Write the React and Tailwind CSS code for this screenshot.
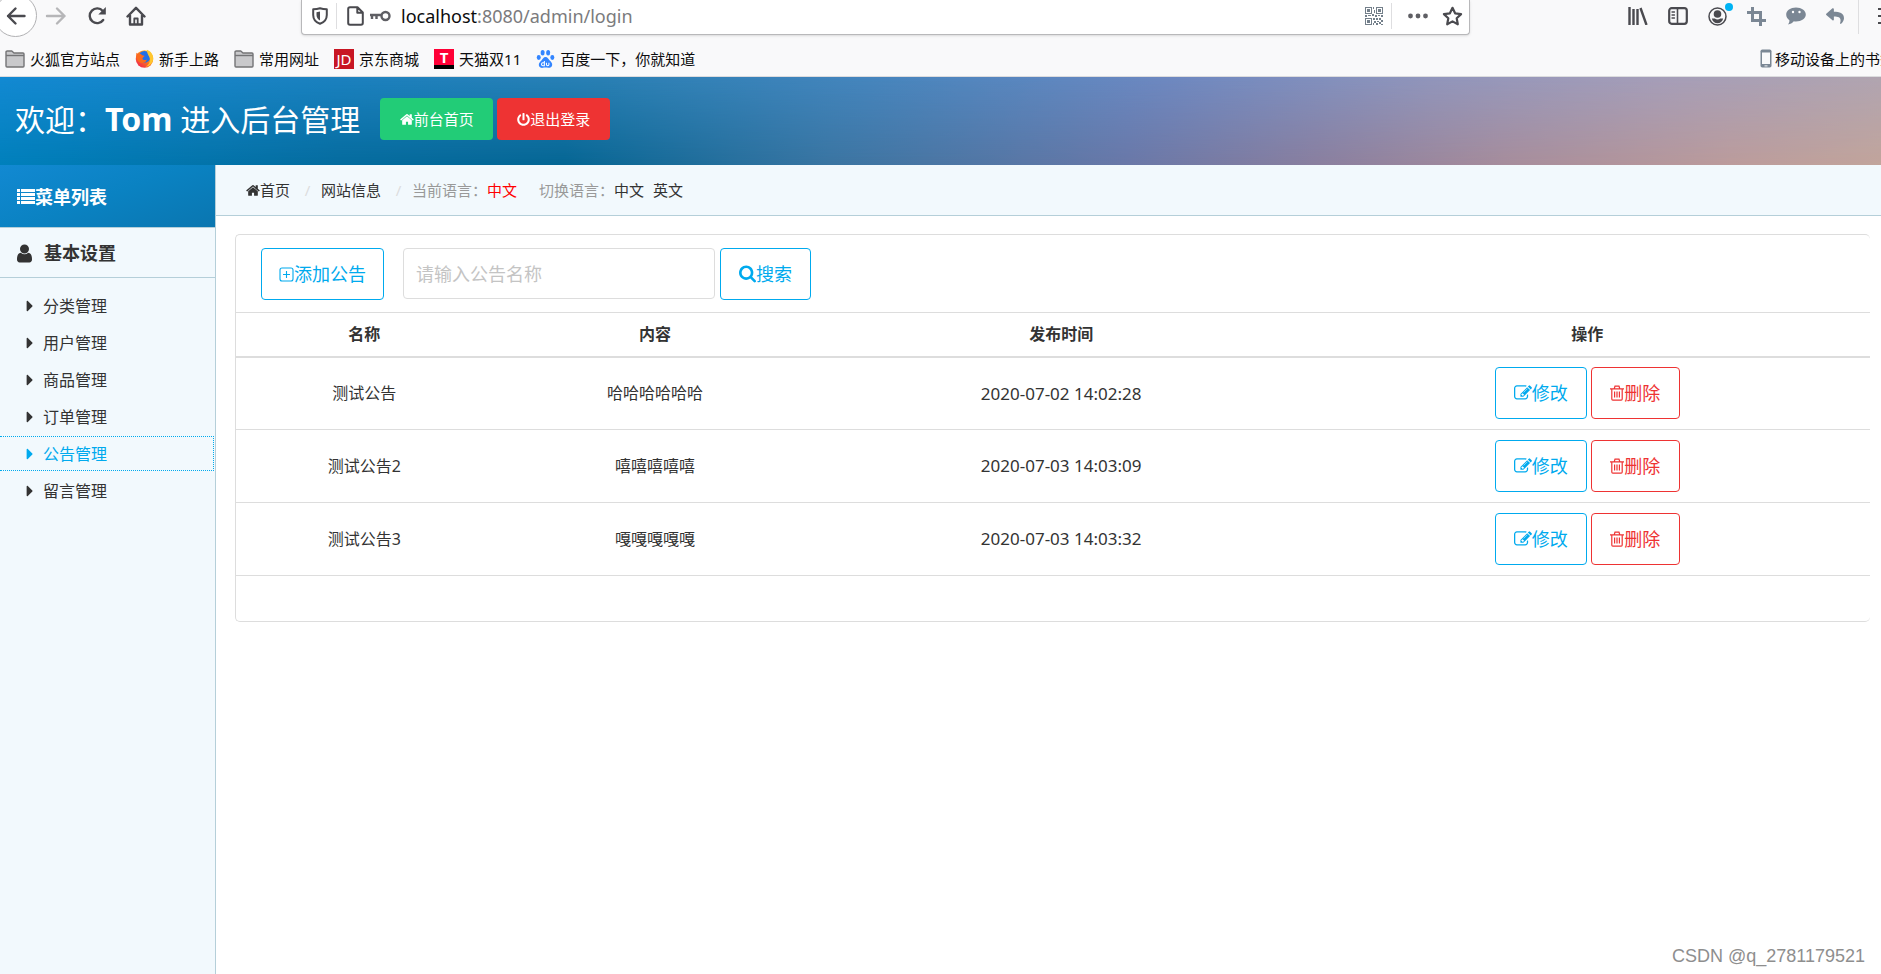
import React from 'react'
import { FaPowerOff, FaCaretRight, FaReply } from 'react-icons/fa'

const sideItems = ['分类管理', '用户管理', '商品管理', '订单管理', '公告管理', '留言管理']

const notices = [
  { id: 1, name: '测试公告', content: '哈哈哈哈哈哈', time: '2020-07-02 14:02:28' },
  { id: 2, name: '测试公告2', content: '嘻嘻嘻嘻嘻', time: '2020-07-03 14:03:09' },
  { id: 3, name: '测试公告3', content: '嘎嘎嘎嘎嘎', time: '2020-07-03 14:03:32' },
]

function HomeIcon() {
  return (
    <svg width="14" height="15" viewBox="64 0 1664 1792" fill="currentColor">
      <path d="M1472 992v480q0 26-19 45t-45 19h-384v-384h-256v384h-384q-26 0-45-19t-19-45v-480q0-1 .5-3t.5-3l575-474 575 474q1 2 1 6zm223-69l-62 74q-8 9-21 11h-3q-13 0-21-7l-692-577-692 577q-12 8-24 7-13-2-21-11l-62-74q-8-10-7-23.5t11-21.5l719-599q32-26 76-26t76 26l244 204v-195q0-14 9-23t23-9h192q14 0 23 9t9 23v408l219 182q10 8 11 21.5t-7 23.5z" />
    </svg>
  )
}

function UserIcon() {
  return (
    <svg width="15" height="21" viewBox="256 0 1280 1792" fill="currentColor">
      <path d="M1536 1399q0 109-62.5 187t-150.5 78h-854q-88 0-150.5-78t-62.5-187q0-85 8.500-160.500t31.500-152 58.500-131 94-89 134.500-34.500q131 128 313 128t313-128q76 0 134.500 34.500t94 89 58.500 131 31.500 152 8.500 160.500zm-256-887q0 159-112.500 271.500t-271.500 112.500-271.500-112.500-112.500-271.500 112.500-271.500 271.500-112.500 271.500 112.500 112.500 271.500z" />
    </svg>
  )
}

function SearchIcon() {
  return (
    <svg width="17" height="18" viewBox="64 128 1664 1664" fill="currentColor">
      <path d="M1216 832q0-185-131.500-316.500t-316.500-131.500-316.500 131.500-131.500 316.500 131.500 316.500 316.500 131.500 316.500-131.500 131.500-316.500zm512 832q0 52-38 90t-90 38q-54 0-90-38l-343-342q-179 124-399 124-143 0-273.500-55.500t-225-150-150-225-55.500-273.500 55.500-273.500 150-225 225-150 273.500-55.500 273.500 55.500 225 150 150 225 55.500 273.500q0 220-124 399l343 343q37 37 37 90z" />
    </svg>
  )
}

function EditIcon() {
  return (
    <svg width="18" height="18" viewBox="0 0 1792 1792" fill="currentColor">
      <path d="M888 1184l116-116-152-152-116 116v56h96v96h56zm440-720q-16-16-33 1l-350 350q-17 17-1 33t33-1l350-350q17-17 1-33zm80 594v190q0 119-84.500 203.500t-203.500 84.500h-832q-119 0-203.500-84.500t-84.500-203.500v-832q0-119 84.500-203.500t203.500-84.500h832q63 0 117 25 15 7 18 23 3 17-9 29l-49 49q-14 14-32 8-23-6-45-6h-832q-66 0-113 47t-47 113v832q0 66 47 113t113 47h832q66 0 113-47t47-113v-126q0-13 9-22l64-64q15-15 35-7t20 29zm-96-738l288 288-672 672h-288v-288zm444 132l-92 92-288-288 92-92q28-28 68-28t68 28l152 152q28 28 28 68t-28 68z" />
    </svg>
  )
}

function TrashIcon() {
  return (
    <svg width="14" height="16" viewBox="0 0 14 16" fill="none" stroke="currentColor" strokeWidth="1.2">
      <path d="M0 3.800h14M1.800 4v10c0 .8.4 1.200 1 1.200h8.400c.6 0 1-.4 1-1.200V4M4.300 3.500L5 1.200h4l.7 2.300M4.600 6.500v6M7 6.500v6M9.400 6.500v6" />
    </svg>
  )
}

function FolderIcon() {
  return (
    <svg width="20" height="18" viewBox="0 0 20 18" fill="#c9c9cb" stroke="#747476" strokeWidth="1.4" strokeLinejoin="round">
      <path d="M1 16V2.200C1 1.500 1.500 1 2.200 1h4.600L9 3h9c.6 0 1 .4 1 1v12c0 .6-.4 1-1 1H2c-.6 0-1-.4-1-1z" />
      <path d="M1 5.500h18" />
    </svg>
  )
}

function FirefoxIcon() {
  return (
    <svg width="19" height="19" viewBox="0 0 20 20">
      <defs>
        <linearGradient id="fox" x1="1" y1="0" x2="0.2" y2="1">
          <stop offset="0" stopColor="#ffd83a" />
          <stop offset="0.45" stopColor="#ff8a16" />
          <stop offset="1" stopColor="#f0234e" />
        </linearGradient>
      </defs>
      <circle cx="10" cy="10.500" r="9.200" fill="url(#fox)" />
      <circle cx="10" cy="8.300" r="6.300" fill="#1f6fe8" />
      <path d="M12.500.8c4.500 1.700 7 5.400 6.600 9.700-.4 4.500-4 7.700-8 8.200 3.300-2 5-4.800 4.600-8.200-.3-2-1.400-3.300-2.100-5C13 4 12.300 2.500 12.500.8z" fill="#ffc62e" />
      <path d="M1.500 4c1 1 2 1.100 3.200 1 1.200 0 2.200.7 2.900 1.700l2.400.5c-.2 1.300-1.700 1.600-2.200 2.800.4 1.700 2.600 2.200 4.700 1-.7 3.200-4 4.500-6.800 3.400C2.300 13.200.7 8.600 1.500 4z" fill="#fb6a1d" />
    </svg>
  )
}

function PawIcon() {
  return (
    <svg width="19" height="20" viewBox="0 0 20 21" fill="#3385ff">
      <ellipse cx="2.900" cy="9" rx="2.100" ry="2.600" />
      <ellipse cx="7" cy="4" rx="2.100" ry="2.900" />
      <ellipse cx="12.800" cy="4" rx="2.100" ry="2.900" />
      <ellipse cx="17.200" cy="9" rx="2.100" ry="2.600" />
      <path d="M10 8.500c2.200 0 3 2 4.400 3.500 1.600 1.600 3 2.700 2.600 5-.4 2.200-2.400 3-4.200 2.800-1.900-.3-3.700-.3-5.600 0C5.400 20.100 3.300 19.200 3 17c-.3-2.200 1.200-3.500 2.700-5C7.200 10.500 7.800 8.500 10 8.500z" />
      <path d="M8.800 12.500v5H7.300c-2 0-2-3 0-3h1.500M11 14.400v2.200c0 1.200 2.600 1.200 2.600 0v-2.200" fill="none" stroke="#fff" strokeWidth="1.1" />
    </svg>
  )
}

function PhoneIcon() {
  return (
    <svg width="12" height="19" viewBox="0 0 12 19">
      <rect x="0.500" y="0.500" width="11" height="18" rx="1.800" fill="#7b8794" />
      <rect x="2" y="3.500" width="8" height="11.500" fill="#f9f9fa" />
      <rect x="4.500" y="16.200" width="3" height="1.300" fill="#d8dce0" />
    </svg>
  )
}

function QrIcon() {
  return (
    <svg width="18" height="18" viewBox="0 0 18 18" fill="#737f8a" shapeRendering="crispEdges">
      <path d="M0 0h7v7H0zM1 1v5h5V1zM11 0h7v7h-7zM12 1v5h5V1zM0 11h7v7H0zM1 12v5h5v-5z" fillRule="evenodd" />
      <path d="M2 2h3v3H2zM13 2h3v3h-3zM2 13h3v3H2zM8 0h1v2H8zM9 3h1v3H9zM0 8h2v2H0zM3 8h3v1H3zM7 7h2v2H7zM10 8h2v2h-2zM13 8h2v1h-2zM16 8h2v2h-2zM8 11h2v2H8zM11 11h2v2h-2zM14 11h2v2h-2zM9 14h2v2H9zM12 14h2v1h-2zM16 13h2v2h-2zM8 16h1v2H8zM11 16h2v2h-2zM14 15h2v2h-2zM16 17h2v1h-2z" />
    </svg>
  )
}

const stroke = { fill: 'none', stroke: '#4a4a4f', strokeWidth: 2.4, strokeLinecap: 'round', strokeLinejoin: 'round' }

function BrowserBar() {
  return (
    <div className="flex h-[35px] items-start">
      <div className="flex w-[301px] shrink-0 items-start">
        <button aria-label="后退" className="-ml-1.5 -mt-1.5 flex size-[43px] shrink-0 items-center justify-center rounded-full border border-[#b1b1b3] bg-white">
          <svg width="20" height="20" viewBox="0 0 20 20" {...stroke}><path d="M18.500 10H2M9.500 2.500L2 10l7.500 7.500" /></svg>
        </button>
        <button aria-label="前进" className="ml-2 mt-1.5">
          <svg width="22" height="20" viewBox="0 0 22 20" {...stroke} stroke="#b6b6b8"><path d="M2 10h17.500M12 2.500l7.500 7.500-7.500 7.500" /></svg>
        </button>
        <button aria-label="刷新" className="ml-5 mt-1.5">
          <svg width="20" height="20" viewBox="0 0 20 20" {...stroke}>
            <path d="M16.200 14A7.400 7.400 0 1 1 15.800 5" />
            <path d="M18.800 1v7.500h-7.500z" fill="#4a4a4f" stroke="none" />
          </svg>
        </button>
        <button aria-label="主页" className="ml-[19px] mt-1.5">
          <svg width="20" height="20" viewBox="0 0 20 20" {...stroke}>
            <path d="M1.500 10.500L10 1.800l8.500 8.700M4 9.500v9h12v-9" />
            <path d="M8.300 18v-5.500h3.400V18" strokeWidth="1.800" />
          </svg>
        </button>
      </div>
      <div className="flex h-[35px] w-[1169px] shrink items-center rounded-b-sm border border-t-0 border-[#b8b8ba] bg-white pb-[3px] pl-2.5 pr-1.5 shadow-sm">
        <svg width="16" height="18" viewBox="0 0 16 18" {...stroke} strokeWidth="2">
          <path d="M8 1.200C5.800 2 3.500 2.300 1.200 2.300V8c0 4.200 2.600 7.300 6.800 8.800 4.200-1.500 6.800-4.600 6.800-8.800V2.300C12.500 2.300 10.200 2 8 1.200z" />
          <path d="M8 4.500v9C5.800 12.300 4.500 10.500 4.500 8V5.200z" fill="#4a4a4f" stroke="none" />
        </svg>
        <span className="ml-2 h-[26px] w-px bg-[#dedee0]" />
        <svg className="ml-2.5" width="17" height="20" viewBox="0 0 17 20" {...stroke} strokeWidth="2">
          <path d="M1.200 3c0-1 .8-1.800 1.800-1.800h7.500l5.300 5.300V17c0 1-.8 1.800-1.800 1.800H3c-1 0-1.800-.8-1.800-1.800zM10.300 1.500v5.200h5.200" />
        </svg>
        <svg className="ml-1.5" width="21" height="12" viewBox="0 0 21 12" fill="none" stroke="#5f5f64" strokeWidth="2.4">
          <circle cx="15.500" cy="6" r="4" />
          <path d="M11.500 5H0M2 5v4M6.500 5v4" />
        </svg>
        <p className="ml-2.5 flex-1 whitespace-nowrap text-[18px] leading-6 text-[#7b7b7d]">
          <span className="text-[#0c0c0d]">localhost</span>:8080/admin/login
        </p>
        <QrIcon />
        <span className="ml-2 h-[26px] w-px bg-[#dedee0]" />
        <button aria-label="更多" className="ml-4">
          <svg width="20" height="6" viewBox="0 0 20 6" fill="#5f5f64"><circle cx="2.500" cy="3" r="2.400" /><circle cx="10" cy="3" r="2.400" /><circle cx="17.500" cy="3" r="2.400" /></svg>
        </button>
        <button aria-label="收藏" className="ml-3.5">
          <svg width="21" height="20" viewBox="0 0 21 20" {...stroke} strokeWidth="2.2"><path d="M10.500 1.800l2.600 5.500 6 .8-4.400 4.200 1.100 6-5.300-2.900-5.300 2.900 1.100-6L1.900 8.100l6-.8z" /></svg>
        </button>
      </div>
      <div className="ml-auto flex h-8 shrink-0 items-center gap-5">
        <svg width="20" height="18" viewBox="0 0 20 18" fill="none" stroke="#4a4a4f" strokeWidth="2.4"><path d="M1.500 0v18M5.500 2v16M9.500 2v16M12.500 1l6 17" /></svg>
        <svg width="20" height="18" viewBox="0 0 20 18" {...stroke} strokeWidth="2.2"><rect x="1.200" y="1.200" width="17.600" height="15.600" rx="2.500" /><path d="M9.500 1.500v15" strokeWidth="1.600" /><path d="M4 5h2.500M4 8h2.500M4 11h2.500" strokeWidth="1.300" /></svg>
        <div className="relative">
          <svg width="19" height="19" viewBox="0 0 19 19"><circle cx="9.500" cy="9.500" r="8.500" fill="none" stroke="#4a4a4f" strokeWidth="1.5" /><circle cx="9.500" cy="7" r="3.800" fill="#4a4a4f" /><path d="M3.800 11.500h3c1.500 1.200 4 1.200 5.400 0h3c-.7 3-3 4.800-5.700 4.800s-5-1.800-5.700-4.800z" fill="#4a4a4f" /></svg>
          <span className="absolute -right-1.5 -top-1 size-2 rounded-full bg-[#00b3f4]" />
        </div>
        <svg width="19" height="19" viewBox="0 0 19 19" fill="none" stroke="#7b8794" strokeWidth="3"><path d="M5.500 0v13.500H19M0 5.500h13.500V19" /></svg>
        <svg width="20" height="18" viewBox="0 0 20 18"><path d="M10 .5c5.500 0 9.800 3 9.800 7s-4.300 7-9.800 7c-.8 0-1.500 0-2.200-.2C6.300 16 4.300 17.300 2 17.500c1-1.200 1.500-2.600 1.400-4.300C1.400 11.900.2 9.900.2 7.500c0-4 4.300-7 9.800-7z" fill="#7b8794" /><circle cx="7" cy="5" r="1.200" fill="#fff" /><circle cx="13.500" cy="5" r="1.200" fill="#fff" /></svg>
        <FaReply className="size-[18px] text-[#7b8794]" />
        <span className="-ml-1.5 h-[36px] w-px bg-[#dedee0]" />
        <svg className="-ml-0.5" width="4" height="18" viewBox="0 0 4 18" fill="#4a4a4f"><path d="M1 1h3v2H1zM1 8h3v2H1zM1 15h3v2H1z" /></svg>
      </div>
    </div>
  )
}

function Bookmarks() {
  return (
    <nav className="flex h-[42px] items-center border-b border-[#dcdcde] pl-[5px] pt-1.5 text-[15px] leading-5 text-[#0c0c0d]">
      <div className="flex flex-1 items-center gap-[15px] whitespace-nowrap">
        <a href="#" className="flex items-center gap-[5px]"><FolderIcon />火狐官方站点</a>
        <a href="#" className="flex items-center gap-[5px]"><FirefoxIcon />新手上路</a>
        <a href="#" className="flex items-center gap-[5px]"><FolderIcon />常用网址</a>
        <a href="#" className="flex items-center gap-[5px]">
          <span className="flex size-5 items-center justify-center bg-[#c81623] text-[15px] leading-5 text-white">JD</span>京东商城
        </a>
        <a href="#" className="flex items-center gap-[5px]">
          <span className="flex size-5 items-start justify-center border-b-4 border-black bg-[#ff0036] text-[15px] font-bold leading-4 text-white">T</span>天猫双11
        </a>
        <a href="#" className="flex items-center gap-[5px]"><PawIcon />百度一下，你就知道</a>
      </div>
      <a href="#" className="flex w-[121px] items-center gap-[3px] overflow-hidden whitespace-nowrap">
        <span className="shrink-0"><PhoneIcon /></span>移动设备上的书签
      </a>
    </nav>
  )
}

function Header() {
  return (
    <header className="relative h-[88px] bg-[linear-gradient(90deg,#0080bc_0%,#056c9f_18%,#056694_30%,#3a75a2_44%,#6a78a8_60%,#8a7f9f_70%,#a78d9c_80%,#bc9c9c_92%,#c2a59c_100%)] text-white">
      {/* lighter upper edge that fades into the base colours */}
      <div className="absolute inset-0 bg-[linear-gradient(90deg,#1289d2_0%,#1b81bf_18%,#2a80b4_32%,#4585bd_46%,#6d88c0_62%,#9095bb_76%,#a49db8_88%,#b0a4b0_100%)] [mask-image:linear-gradient(to_bottom,#000,transparent)]" />
      <div className="relative flex h-full items-center pb-1 pl-[15px]">
        <h1 className="text-[30px]">欢迎：<b className="text-[32px]">Tom</b> 进入后台管理</h1>
        <div className="ml-5 flex gap-1 text-[15px]">
          <a href="#" className="flex h-[42px] w-[113px] items-center justify-center rounded bg-[#22cc77]"><HomeIcon />前台首页</a>
          <a href="#" className="flex h-[42px] w-[113px] items-center justify-center rounded bg-[#ee3333]"><FaPowerOff className="size-[13px]" />退出登录</a>
        </div>
      </div>
    </header>
  )
}

function Sidebar() {
  return (
    <aside className="w-[216px] shrink-0 border-r border-[#b5cfd9] bg-[#f2f9fd]">
      <div className="flex h-[62px] items-center bg-[linear-gradient(160deg,#1289d2_0%,#0a82c2_50%,#0a76b0_100%)] pl-[17px] pt-0.5 text-[18px] font-bold text-white">
        <svg width="18" height="16" viewBox="0 0 18 16" fill="currentColor"><path d="M0 0h3v3H0zM4 0h14v3H4zM0 4h3v3H0zM4 4h14v3H4zM0 8h3v3H0zM4 8h14v3H4zM0 12h3v3H0zM4 12h14v3H4z" /></svg>
        菜单列表
      </div>
      <h2 className="flex h-[51px] items-center gap-3 border-y border-[#b5cfd9] pl-[17px] pt-0.5 text-[18px] font-bold">
        <UserIcon />基本设置
      </h2>
      <ul className="mr-px flex flex-col gap-0.5 pt-2.5">
        {sideItems.map((item) => {
          const active = item === '公告管理'
          return (
            <li key={item}>
              <a href="#" className={`flex h-[35px] items-center gap-1 border border-l-0 border-dotted pl-[21px] text-base ${active ? 'border-[#00aaee] text-[#00aaee]' : 'border-transparent'}`}>
                <FaCaretRight className="size-[18px]" />{item}
              </a>
            </li>
          )
        })}
      </ul>
    </aside>
  )
}

function Breadcrumb() {
  return (
    <div className="flex h-[51px] items-center border-b border-[#b5cfd9] bg-[#f2f9fd] pl-[30px] text-[15px] text-[#999]">
      <a href="#" className="flex items-center text-[#333]"><HomeIcon />首页</a>
      <span className="w-[31px] pl-1 text-center text-[#ddd]">/</span>
      <a href="#" className="text-[#333]">网站信息</a>
      <span className="w-[31px] pl-1 text-center text-[#ddd]">/</span>
      <span>当前语言：</span>
      <span className="text-[#ff0000]">中文</span>
      <span className="ml-[22px]">切换语言：</span>
      <a href="#" className="text-[#333]">中文</a>
      <a href="#" className="ml-[9px] text-[#333]">英文</a>
    </div>
  )
}

const outline = 'flex h-[52px] items-center justify-center rounded border text-[18px]'

function NoticePanel() {
  return (
    <section className="ml-[19px] mr-[11px] mt-[18px] rounded-[5px] border border-r-0 border-[#ddd] pb-[45px]">
      <form className="flex h-[77px] pl-[25px] pt-[13px]" onSubmit={(e) => e.preventDefault()}>
        <button type="button" className={`${outline} w-[123px] border-[#00aaee] text-[#00aaee]`}>
          <svg width="15" height="15" viewBox="0 0 15 15" fill="none" stroke="currentColor" strokeWidth="1.1"><rect x="1" y="1" width="13" height="13" rx="2" /><path d="M7.500 4v7M4 7.500h7" /></svg>
          添加公告
        </button>
        <input
          aria-label="公告名称"
          placeholder="请输入公告名称"
          className="ml-[19px] h-[51px] w-[312px] rounded border border-[#ddd] px-3 text-[18px] outline-none placeholder:text-[#c4c4c4]"
        />
        <button type="submit" className={`${outline} ml-[5px] w-[91px] border-[#00aaee] text-[#00aaee]`}>
          <SearchIcon />搜索
        </button>
      </form>
      <table className="w-full table-fixed border-collapse text-center text-base">
        <thead>
          <tr className="h-[44px] border-b-2 border-t border-[#ddd]">
            <th className="w-[15.7%]">名称</th>
            <th className="w-[19.9%]">内容</th>
            <th className="w-[29.8%]">发布时间</th>
            <th>操作</th>
          </tr>
        </thead>
        <tbody>
          {notices.map((n) => (
            <tr key={n.id} className="h-[73px] border-b border-[#ddd]">
              <td>{n.name}</td>
              <td>{n.content}</td>
              <td className="text-[17px]">{n.time}</td>
              <td>
                <div className="flex justify-center gap-1">
                  <button className={`${outline} w-[92px] border-[#00aaee] text-[#00aaee]`}>
                    <EditIcon />修改
                  </button>
                  <button className={`${outline} w-[89px] border-[#ee3333] text-[#ee3333]`}>
                    <TrashIcon />删除
                  </button>
                </div>
              </td>
            </tr>
          ))}
        </tbody>
      </table>
    </section>
  )
}

export default function App() {
  return (
    <div className="relative flex min-h-screen flex-col overflow-x-hidden bg-white font-['Noto_Sans','Noto_Sans_CJK_SC',sans-serif] text-[#333]">
      <div className="bg-[#f9f9fa]">
        <BrowserBar />
        <Bookmarks />
      </div>
      <Header />
      <div className="flex flex-1">
        <Sidebar />
        <main className="min-w-0 flex-1">
          <Breadcrumb />
          <NoticePanel />
        </main>
      </div>
      <p className="absolute bottom-1 right-4 font-['Liberation_Sans',sans-serif] text-[18px] text-[#8e8e8e]">CSDN @q_2781179521</p>
    </div>
  )
}
